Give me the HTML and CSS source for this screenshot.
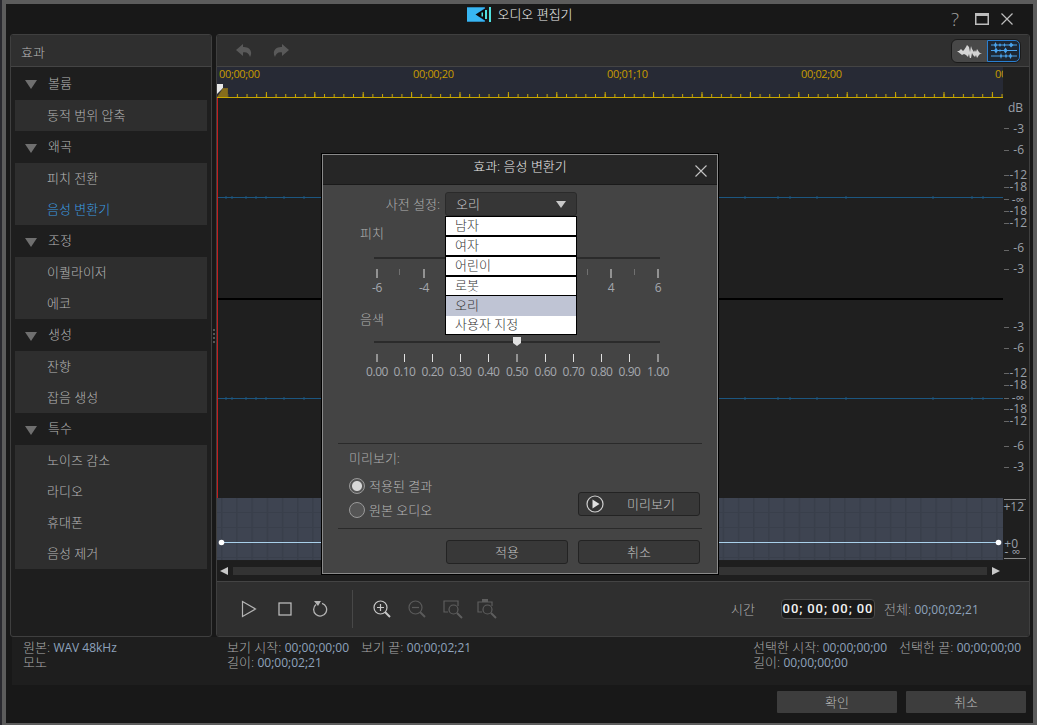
FILE: index.html
```html
<!DOCTYPE html>
<html lang="ko">
<head>
<meta charset="utf-8">
<title>오디오 편집기</title>
<link rel="stylesheet" href="styles.css">
</head>
<body>
<div class="window">
  <header class="titlebar">
    <div class="title">
      <svg class="logo" width="25" height="15" viewBox="0 0 25 15"><rect width="18" height="14" y="0.5" fill="#2a9be8"/><path d="M0 .5h18L9 7.5 18 14.5H0z" fill="#38b6f2"/><path d="M18 1.5 8.5 7.5 18 13.5z" fill="#0c0c0c"/><rect x="14.5" y="5.5" width="1.5" height="4" fill="#4fe0e0"/><rect x="18" y="3" width="2" height="9" fill="#4fe0e0"/><rect x="22" y="0" width="2" height="15" fill="#4fe0e0"/></svg>
      <span>오디오 편집기</span>
    </div>
    <div class="winbtns">
      <span class="help">?</span>
      <svg width="14" height="12" viewBox="0 0 14 12"><rect x=".75" y=".75" width="12.5" height="10.5" fill="none" stroke="#bdbdbd" stroke-width="1.5"/><rect x=".5" y=".5" width="13" height="2.5" fill="#bdbdbd"/></svg>
      <svg class="win-x" width="12" height="12" viewBox="0 0 12 12"><path d="M.5.5l11 11M11.5.5l-11 11" stroke="#bdbdbd" stroke-width="1.2" fill="none"/></svg>
    </div>
  </header>

  <main class="main">
    <aside class="panel effects">
      <div class="panel-head">효과</div>
      <div class="group first"><i class="tri"></i>볼륨</div>
      <div class="items"><div class="item">동적 범위 압축</div></div>
      <div class="group"><i class="tri"></i>왜곡</div>
      <div class="items"><div class="item">피치 전환</div><div class="item active">음성 변환기</div></div>
      <div class="group"><i class="tri"></i>조정</div>
      <div class="items"><div class="item">이퀄라이저</div><div class="item">에코</div></div>
      <div class="group"><i class="tri"></i>생성</div>
      <div class="items"><div class="item">잔향</div><div class="item">잡음 생성</div></div>
      <div class="group"><i class="tri"></i>특수</div>
      <div class="items"><div class="item">노이즈 감소</div><div class="item">라디오</div><div class="item">휴대폰</div><div class="item">음성 제거</div></div>
    </aside>

    <div class="grip"><i></i><i></i><i></i><i></i></div>

    <section class="panel editor">
      <div class="toolbar">
        <div class="undo">
          <svg width="16" height="14" viewBox="0 0 16 14"><path d="M7 0 0 6l7 6V8.500c3-1 6 .5 7 4.500 3-5 0-10.500-7-10z" fill="#595959"/></svg>
          <svg width="16" height="14" viewBox="0 0 16 14"><path d="M9 0l7 6-7 6V8.500c-3-1-6 .5-7 4.500C-1 8 2 2.500 9 3z" fill="#595959"/></svg>
        </div>
        <div class="toggle">
          <span class="t-wave"><svg width="26" height="14" viewBox="0 0 26 14"><path d="M0 7h2l2-2 2 2 1-1 2-3 1-2 2 2 1 5 1-6 1 3 2 3 1-2 1 2 1-3 2 3 1 1h2l-2 1-1 1-2 3-1-3-1 2-2-2-1-2-1 5-1 1-1-5-1 3-2-2-2-1-2 1z" fill="#d4d4d4"/></svg></span>
          <span class="t-multi"><svg width="26" height="17" viewBox="0 0 26 17"><g fill="#4aa3ec"><rect y="2.500" width="26" height="1"/><rect y="8" width="26" height="1"/><rect y="13.500" width="26" height="1"/><path d="M4.500 0l1.500 3-1.500 3L3 3zM9 1l1 2-1 2-1-2zM13.500 1l1 2-1 2-1-2zM20 .5l2.500 2.500L20 5.500 18 3zM5 5.500l2 3-2 3-2-3zM14.500 5.500l2 3-2 3-2-3zM9 7l1 1.500L9 10 8 8.500zM10 11l1 3-1 3-1-3zM15 11.500l1 2.500-1 2.500-1-2.500zM19.500 11l1.500 3-1.500 3-1.500-3z"/></g></svg></span>
        </div>
      </div>

      <svg class="canvas" width="813" height="494" viewBox="217 67 813 494" xmlns="http://www.w3.org/2000/svg">
        <defs>
          <pattern id="minor" x="217.500" y="0" width="9.680" height="10" patternUnits="userSpaceOnUse"><rect width="1" height="10" fill="#c9a800"/></pattern>
          <pattern id="major" x="217.500" y="0" width="48.400" height="10" patternUnits="userSpaceOnUse"><rect width="1" height="10" fill="#c9a800"/></pattern>
          <pattern id="gridv" x="221" y="498" width="15.200" height="15" patternUnits="userSpaceOnUse"><rect width="15.200" height="15" fill="#3e4451"/><rect width="1.500" height="15" fill="#383e4a"/><rect y="14" width="15.200" height="1" fill="#393f4b"/></pattern>
        </defs>
        <rect x="217" y="67" width="813" height="494" fill="#1f1f1f"/>
        <rect x="217" y="67" width="786" height="30" fill="#272a35"/>
        <rect x="217" y="97" width="786" height="1" fill="#c9a800"/>
        <rect x="228" y="94" width="775" height="3" fill="url(#minor)"/>
        <rect x="228" y="92" width="775" height="5" fill="url(#major)"/>
        <text class="rt" x="219" y="78">00;00;00</text>
        <text class="rt" x="413" y="78">00;00;20</text>
        <text class="rt" x="607" y="78">00;01;10</text>
        <text class="rt" x="801" y="78">00;02;00</text>
        <svg x="995" y="67" width="8" height="14" viewBox="995 67 8 14"><text class="rt" x="995" y="78">00</text></svg>

        <path d="M217 84h6v4l-6 6z" fill="#e8e8e8"/>
        <path d="M217 97l6-9h5v9z" fill="#7a6420"/>
        <path d="M218 97l5-8h4v8z" fill="#866d1c"/>

        <rect x="218" y="298" width="785" height="2" fill="#000"/>
        <rect x="218" y="197" width="785" height="1" fill="#1c5680"/>
        <rect x="218" y="398" width="785" height="1" fill="#1c5680"/>
        <path d="M226 196v3M232 196v3M246 196v3M256 196v3M266 196v3M284 196v3M304 196v3M745 196v3M778 196v3M790 196v3M817 196v3M846 196v3M933 196v3M972 196v3M983 196v3M226 397v3M232 397v3M246 397v3M256 397v3M266 397v3M284 397v3M304 397v3M745 397v3M778 397v3M790 397v3M817 397v3M846 397v3M933 397v3M972 397v3M983 397v3" stroke="#1c5680" stroke-width="1"/>
        <rect x="217" y="98" width="1" height="400" fill="#c41d1d"/>

        <rect x="217" y="498" width="786" height="62" fill="url(#gridv)"/>
        <rect x="221" y="542" width="777" height="1" fill="#a9d0ea"/>
        <circle cx="221.500" cy="542.500" r="2.800" fill="#fff"/>
        <circle cx="998.500" cy="542.500" r="2.800" fill="#fff"/>

        <text class="db" x="1023" y="112">dB</text>
        <g class="dash"><path d="M1004 128.500h5M1004 150.500h5M1004 175.500h5M1004 187.500h5M1004 199.500h5M1004 211.500h5M1004 223.500h5M1004 250.500h5M1004 269.500h5M1004 327.500h5M1004 348.500h5M1004 373.500h5M1004 385.500h5M1004 398.500h5M1004 409.500h5M1004 421.500h5M1004 446.500h5M1004 467.500h5"/></g>
        <text class="db" x="1024" y="133">-3</text><text class="db" x="1024" y="154">-6</text><text class="db" x="1027" y="179">-12</text><text class="db" x="1027" y="191">-18</text><text class="db" x="1024" y="204">-∞</text><text class="db" x="1027" y="215">-18</text><text class="db" x="1027" y="227">-12</text><text class="db" x="1024" y="252">-6</text><text class="db" x="1024" y="273">-3</text>
        <text class="db" x="1024" y="331">-3</text><text class="db" x="1024" y="352">-6</text><text class="db" x="1027" y="377">-12</text><text class="db" x="1027" y="389">-18</text><text class="db" x="1024" y="402">-∞</text><text class="db" x="1027" y="413">-18</text><text class="db" x="1027" y="425">-12</text><text class="db" x="1024" y="450">-6</text><text class="db" x="1024" y="471">-3</text>
        <rect x="1004" y="499" width="22" height="1" fill="#8a8a8a"/>
        <rect x="1004" y="558" width="22" height="1" fill="#8a8a8a"/>
        <text class="db" x="1024" y="511">+12</text><text class="db" x="1018" y="548">+0</text><text class="db" x="1020" y="556">- ∞</text>
      </svg>

      <div class="scroll">
        <i class="arr-l"></i>
        <div class="scroll-track"></div>
        <i class="arr-r"></i>
      </div>

      <div class="transport">
        <div class="tbtns">
          <svg width="16" height="18" viewBox="0 0 16 18"><path d="M1.500 1.500 14.500 9 1.500 16.500z" fill="none" stroke="#b4b4b4" stroke-width="1.200"/></svg>
          <svg width="14" height="14" viewBox="0 0 14 14"><rect x="1" y="1" width="12" height="12" fill="none" stroke="#c4c4c4" stroke-width="1.200"/></svg>
          <svg class="rewind" width="16" height="16" viewBox="0 0 16 16"><path d="M4 3.500a6.500 6.500 0 1 0 6-1.200" fill="none" stroke="#b4b4b4" stroke-width="1.300"/><path d="M2 0h7l-3 5z" fill="#b4b4b4"/></svg>
        </div>
        <div class="vsep"></div>
        <div class="zbtns">
          <svg width="18" height="19" viewBox="0 0 18 19"><circle cx="7.500" cy="7.500" r="6.500" fill="none" stroke="#c8c8c8" stroke-width="1.200"/><path d="M4 7.500h7M7.500 4v7" stroke="#c8c8c8" stroke-width="1.200"/><path d="M12 12l5 5" stroke="#c8c8c8" stroke-width="2"/></svg>
          <svg width="18" height="19" viewBox="0 0 18 19"><circle cx="7.500" cy="7.500" r="6.500" fill="none" stroke="#5a5a5a" stroke-width="1.200"/><path d="M4 7.500h7" stroke="#5a5a5a" stroke-width="1.200"/><path d="M12 12l5 5" stroke="#5a5a5a" stroke-width="2"/></svg>
          <svg width="20" height="19" viewBox="0 0 20 19"><path d="M5 12H1V1h14v5" fill="none" stroke="#5e5e5e" stroke-width="1.200"/><circle cx="10.500" cy="9.500" r="4.500" fill="none" stroke="#5e5e5e" stroke-width="1.200"/><path d="M14 13l5 5" stroke="#5e5e5e" stroke-width="2"/></svg>
          <svg width="20" height="20" viewBox="0 0 20 20"><rect x="5" y="0" width="6" height="3" fill="#5e5e5e"/><path d="M5 13H1V3h14v4" fill="none" stroke="#5e5e5e" stroke-width="1.200"/><circle cx="10.500" cy="10.500" r="4.500" fill="none" stroke="#5e5e5e" stroke-width="1.200"/><path d="M14 14l5 5" stroke="#5e5e5e" stroke-width="2"/></svg>
        </div>
        <div class="timeinfo">
          <span class="time-label">시간</span>
          <span class="timebox">00; 00; 00; 00</span>
          <span class="total">전체: <span class="v">00;00;02;21</span></span>
        </div>
      </div>
    </section>
  </main>

  <div class="status">
    <div class="s-col s-a">
      <div>원본: <span class="v">WAV 48kHz</span></div>
      <div>모노</div>
    </div>
    <div class="s-col s-b">
      <div class="s-line"><span>보기 시작: <span class="v">00;00;00;00</span></span><span>보기 끝: <span class="v">00;00;02;21</span></span></div>
      <div>길이: <span class="v">00;00;02;21</span></div>
    </div>
    <div class="s-col s-c">
      <div class="s-line"><span>선택한 시작: <span class="v">00;00;00;00</span></span><span>선택한 끝: <span class="v">00;00;00;00</span></span></div>
      <div>길이: <span class="v">00;00;00;00</span></div>
    </div>
  </div>

  <footer class="footer">
    <button class="fbtn">확인</button>
    <button class="fbtn">취소</button>
  </footer>

  <div class="dialog">
    <div class="d-title">
      <span>효과: 음성 변환기</span>
      <svg class="d-close" width="12" height="12" viewBox="0 0 12 12"><path d="M.5.500l11 11M11.500.5l-11 11" stroke="#c4c4c4" stroke-width="1.100" fill="none"/></svg>
    </div>
    <div class="d-body">
      <div class="preset">
        <label>사전 설정:</label>
        <div class="select"><span>오리</span><i class="sel-tri"></i></div>
      </div>
      <div class="d-label pitch">피치</div>
      <svg class="slider-a" width="310" height="44" viewBox="362 250 310 44">
        <rect x="374" y="256" width="286" height="2" fill="#2b2b2b"/>
        <g stroke="#e0e0e0"><path d="M377 268v9M424 268v9M611 268v9M658 268v9"/></g>
        <g stroke="#707070"><path d="M399.500 268v6M634.500 268v6M587.500 268v6"/></g>
        <text class="sl" x="377" y="291">-6</text><text class="sl" x="424" y="291">-4</text><text class="sl" x="611" y="291">4</text><text class="sl" x="658" y="291">6</text>
      </svg>
      <div class="d-label timbre">음색</div>
      <svg class="slider-b" width="310" height="50" viewBox="362 335 310 50">
        <rect x="374" y="341" width="286" height="2" fill="#2b2b2b"/>
        <path d="M513 337h8v6l-4 3-4-3z" fill="#e0e0e0"/>
        <g stroke="#e0e0e0"><path d="M377 354v8M404.500 354v8M432.500 354v8M460.500 354v8M488.500 354v8M517 354v8M545.500 354v8M573.500 354v8M601.500 354v8M629.500 354v8M658 354v8"/></g>
        <text class="sl" x="377" y="376">0.00</text><text class="sl" x="404.500" y="376">0.10</text><text class="sl" x="432.500" y="376">0.20</text><text class="sl" x="460.500" y="376">0.30</text><text class="sl" x="488.500" y="376">0.40</text><text class="sl" x="517" y="376">0.50</text><text class="sl" x="545.500" y="376">0.60</text><text class="sl" x="573.500" y="376">0.70</text><text class="sl" x="601.500" y="376">0.80</text><text class="sl" x="629.500" y="376">0.90</text><text class="sl" x="658" y="376">1.00</text>
      </svg>
      <div class="preview">
        <div class="pv-head">미리보기:</div>
        <div class="pv-row">
          <div class="radios">
            <div class="radio on"><i></i>적용된 결과</div>
            <div class="radio"><i></i>원본 오디오</div>
          </div>
          <button class="dbtn pv-btn">
            <svg width="18" height="18" viewBox="0 0 18 18"><circle cx="9" cy="9" r="8" fill="#333" stroke="#cfcfcf" stroke-width="1.200"/><path d="M6.500 4.500 13.500 9l-7 4.500z" fill="#e0e0e0"/></svg>
            <span>미리보기</span>
          </button>
        </div>
      </div>
      <div class="d-actions">
        <button class="dbtn">적용</button>
        <button class="dbtn">취소</button>
      </div>
    </div>
    <ul class="dropdown">
      <li>남자</li><li>여자</li><li>어린이</li><li>로봇</li><li class="sel">오리</li><li class="last">사용자 지정</li>
    </ul>
  </div>
</div>
</body>
</html>
```

FILE: styles.css
```css
* { box-sizing: border-box; }
html, body { margin: 0; height: 100%; }
body {
  width: 1037px; height: 725px; overflow: hidden;
  background: #5c5c5c;
  border-left: 2px solid #2a2a30;
  padding: 4px 4px 2px 4px;
  font: 300 13px/14px "Open Sans", "Noto Sans CJK KR", sans-serif;
  color: #b9b9b9;
}
.window {
  position: relative;
  height: 719px;
  background: #181818;
  display: flex; flex-direction: column;
  padding: 0 3px 0 4px;
}
.titlebar { height: 30px; flex: none; display: flex; align-items: center; justify-content: center; position: relative; }
.title { display: flex; align-items: center; gap: 5px; color: #f0f0f0; padding-bottom: 10px; }
.logo { display: block; }
.winbtns { position: absolute; right: 17px; top: 7px; display: flex; align-items: center; gap: 11px; }
.win-x { margin-left: 1px; }
.help { font-size: 19px; line-height: 16px; color: #a0a0a0; width: 12px; margin-right: 3px; text-align: center; }

.main { display: flex; height: 603px; flex: none; }
.panel { background: #1e1e1e; border: 1px solid #3f3f3f; border-radius: 3px; display: flex; flex-direction: column; overflow: hidden; }
.effects { width: 202px; flex: none; }
.panel-head { height: 32px; flex: none; background: #2f2f2f; border-bottom: 1px solid #444; padding-left: 10px; line-height: 34px; color: #b5b5b5; }
.group { height: 32px; flex: none; display: flex; align-items: center; padding: 0 0 2px 14px; color: #b5b5b5; }
.group.first { height: 33px; }
.tri { width: 0; height: 0; border-left: 6px solid transparent; border-right: 6px solid transparent; border-top: 9px solid #6f6f6f; margin: 4px 11px 0 0; }
.items { margin: 0 4px; background: #2e2e2e; flex: none; }
.item { height: 31px; line-height: 31px; padding-left: 32px; color: #b5b5b5; }
.item.active { color: #3b9ce0; }

.grip { width: 4px; flex: none; display: flex; flex-direction: column; align-items: center; justify-content: center; gap: 2px; }
.grip i { width: 2px; height: 2px; background: #555; }

.editor { flex: 1; min-width: 0; }
.toolbar { height: 32px; flex: none; background: #2f2f2f; border-bottom: 1px solid #444; display: flex; align-items: center; justify-content: space-between; padding: 0 8px 0 19px; }
.undo { display: flex; gap: 21px; }
.toggle { display: flex; width: 70px; height: 24px; border: 1px solid #1b1b1b; border-radius: 6px; overflow: hidden; background: #484848; }
.t-wave { width: 35px; display: flex; align-items: center; justify-content: center; }
.t-multi { flex: 1; display: flex; align-items: center; justify-content: center; background: #1d2733; border: 1px solid #2a7fd0; border-radius: 0 5px 5px 0; }

.canvas { display: block; flex: none; }
.rt { font-size: 11px; font-weight: 400; fill: #c79c00; font-family: "Open Sans", sans-serif; letter-spacing: -.35px; }
.db { font-size: 12px; font-weight: 400; fill: #9a9fa8; text-anchor: end; font-family: "Open Sans", sans-serif; }
.dash path { stroke: #666; stroke-width: 1; }

.scroll { height: 21px; flex: none; display: flex; align-items: center; padding: 0 29px 0 3px; gap: 5px; margin-top: -1px; }
.arr-l { border-right: 8px solid #c8c8c8; border-top: 4px solid transparent; border-bottom: 4px solid transparent; }
.arr-r { border-left: 8px solid #c8c8c8; border-top: 4px solid transparent; border-bottom: 4px solid transparent; }
.scroll-track { flex: 1; height: 8px; background: #333; }

.transport { flex: 1; background: #2f2f2f; border-top: 1px solid #444; display: flex; align-items: center; padding-left: 24px; }
.tbtns { display: flex; align-items: center; gap: 21px; width: 111px; }
.tbtns .rewind { margin-left: -1px; }
.vsep { width: 1px; height: 38px; background: #484848; }
.zbtns { display: flex; align-items: center; gap: 17px; margin-left: 20px; width: 125px; }
.zbtns svg:nth-child(n+3) { margin-right: -3px; }
.timeinfo { display: flex; align-items: center; margin-left: 233px; }
.time-label { width: 50px; color: #b0b0b0; }
.timebox { width: 94px; height: 20px; background: #1a1a1a; border: 1px solid #4a4a4a; border-radius: 4px; color: #f2f2f2; font: 500 13px/18px Roboto, sans-serif; letter-spacing: .9px; text-align: center; white-space: nowrap; }
.total { margin-left: 9px; color: #a8a8a8; white-space: nowrap; }
.v { font-size: 12px; font-weight: 400; color: #8ea3bd; }

.status { height: 48px; flex: none; background: #1e1e1e; margin: 0 -1px 0 2px; display: flex; padding: 3px 0 0 11px; }
.s-col { flex: none; white-space: nowrap; color: #a9a9a9; }
.s-a { width: 204px; }
.s-b { width: 526px; }
.s-line { display: flex; gap: 12px; }

.footer { flex: 1; display: flex; justify-content: flex-end; gap: 9px; padding: 6px 4px 0 0; }
.fbtn { width: 120px; height: 22px; background: #3d3d3d; border: 0; border-radius: 1px; color: #b9b9b9; font: inherit; padding: 0; }

.dialog {
  position: absolute; left: 315px; top: 149px; width: 398px; height: 422px;
  background: #444; border: 1px solid #000;
  box-shadow: inset 0 0 0 1px #8a8a8a;
  display: flex; flex-direction: column;
  padding: 1px;
}
.d-title { height: 30px; flex: none; background: #262626; border-bottom: 1px solid #1a1a1a; color: #e8e8e8; display: flex; align-items: center; justify-content: center; position: relative; padding-bottom: 7px; }
.d-close { position: absolute; right: 10px; top: 10px; }
.d-body { flex: 1; display: flex; flex-direction: column; min-height: 0; }
.preset { display: flex; align-items: center; height: 24px; margin-top: 7px; }
.preset label { width: 117px; text-align: right; color: #b0b0b0; margin-right: 5px; }
.select { width: 132px; height: 24px; flex: none; background: #363636; border: 1px solid #2a2a2a; border-radius: 3px; display: flex; align-items: center; justify-content: space-between; padding: 0 10px; color: #c8c8c8; }
.sel-tri { width: 0; height: 0; border-left: 5px solid transparent; border-right: 5px solid transparent; border-top: 7px solid #c8c8c8; }
.d-label { padding-left: 37px; color: #aeaeae; height: 14px; }
.pitch { margin-top: 10px; }
.slider-a { display: block; margin: 11px 0 0 39px; flex: none; }
.timbre { margin-top: 17px; }
.slider-b { display: block; margin: 9px 0 0 39px; flex: none; }
.sl { font-size: 12px; font-weight: 400; fill: #a4a8ae; text-anchor: middle; font-family: "Open Sans", sans-serif; letter-spacing: -.4px; }

.preview { margin: 58px 15px 0; flex: none; border-top: 1px solid #2a2a2a; height: 86px; border-bottom: 1px solid #2a2a2a; padding: 6px 0 0 11px; }
.pv-head { color: #aeaeae; line-height: 16px; }
.pv-row { display: flex; justify-content: space-between; }
.radios { margin-top: 12px; display: flex; flex-direction: column; gap: 8px; }
.radio { display: flex; align-items: center; gap: 4px; height: 16px; color: #b5b5b5; }
.radio i { width: 16px; height: 16px; border-radius: 50%; background: #555; border: 1px solid #9a9a9a; flex: none; }
.radio.on i { background: radial-gradient(circle, #d8d8d8 0 4.500px, #555 5.500px); }
.dbtn { width: 122px; height: 24px; background: #383838; border: 1px solid #232323; border-radius: 3px; color: #c0c0c0; font: inherit; padding: 0; }
.pv-btn { display: flex; align-items: center; margin: 26px 2px 0 0; padding-left: 7px; }
.pv-btn span { margin-left: 23px; }
.d-actions { display: flex; justify-content: flex-end; gap: 10px; padding: 11px 17px 0 0; }

.dropdown { position: absolute; left: 123px; top: 62px; width: 132px; margin: 0; padding: 0; list-style: none; background: #000; border: 1px solid #000; color: #333; }
.dropdown li { height: 18px; margin-bottom: 2px; background: #fff; line-height: 17px; padding-left: 9px; }
.dropdown li.sel { background: #bfc4d4; height: 20px; margin: -1px 0 0; line-height: 19px; }
.dropdown li.last { margin-bottom: 0; }
```
